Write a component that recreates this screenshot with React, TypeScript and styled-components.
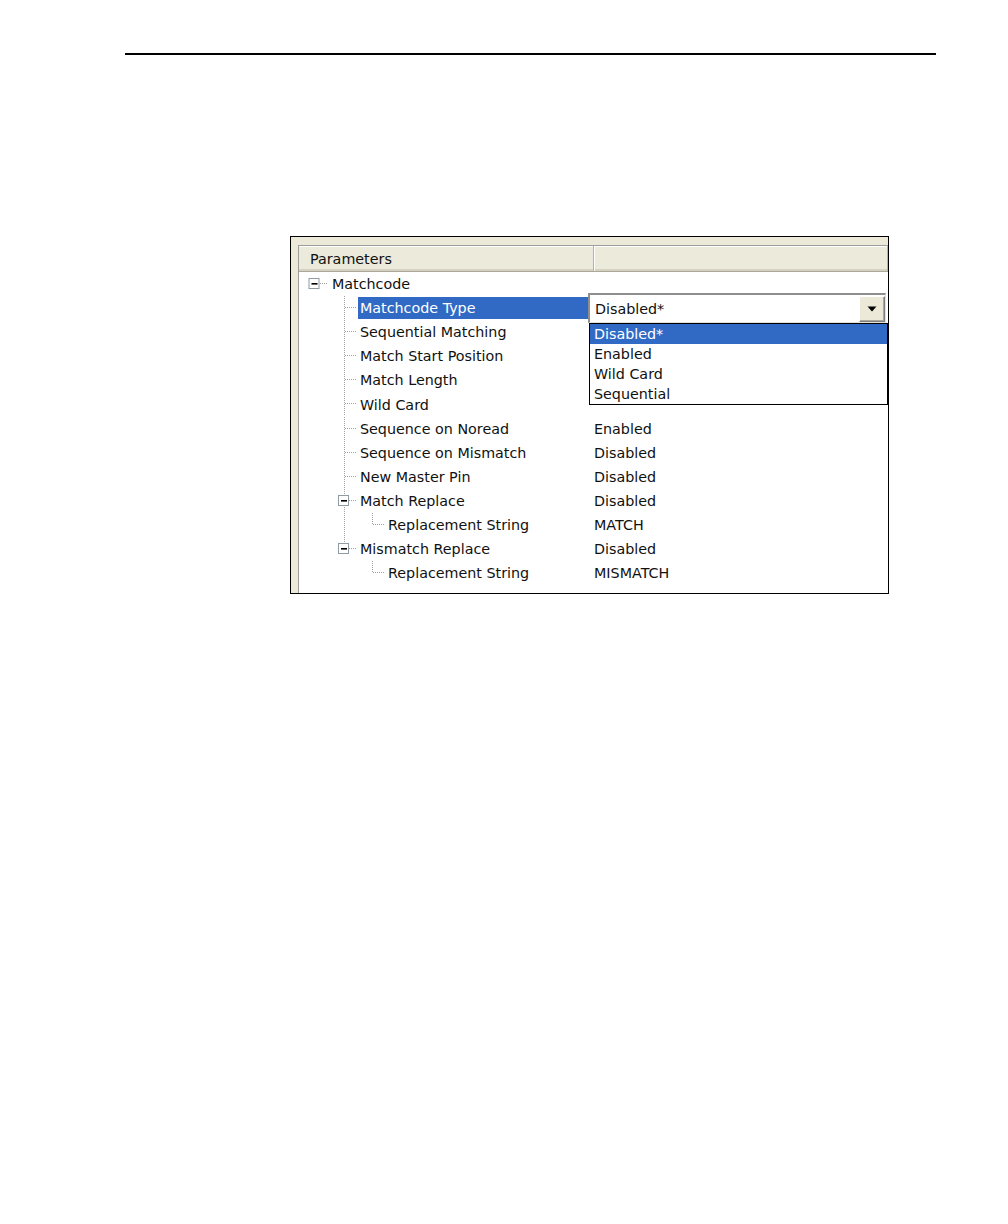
import React from "react";
import styled, { createGlobalStyle } from "styled-components";

const GlobalStyle = createGlobalStyle`
  html, body { margin: 0; padding: 0; background: #ffffff; }
  body { font-family: "DejaVu Sans", Verdana, sans-serif; }
`;

const Page = styled.div`
  width: 1008px;
  height: 1224px;
  padding-top: 53px;
  box-sizing: border-box;
`;

const Rule = styled.div`
  margin-left: 125px;
  width: 811px;
  height: 2px;
  background: #000;
`;

const Figure = styled.div`
  margin-top: 181px;
  margin-left: 290px;
  width: 599px;
  height: 358px;
  box-sizing: border-box;
  border: 1px solid #000;
  background: #ece9d8;
  padding: 8px 0 0 7px;
  overflow: hidden;
  font-family: "DejaVu Sans", Verdana, sans-serif;
  font-size: 14.3px;
  color: #111;
`;

const Inner = styled.div`
  height: 100%;
  background: #fff;
  border-top: 1px solid #9d9d9d;
  border-left: 1px solid #9d9d9d;
  display: flex;
  flex-direction: column;
`;

const Header = styled.div`
  display: flex;
  height: 26px;
  box-sizing: border-box;
  background: #ebeadb;
  border-bottom: 1px solid #aca899;
  box-shadow: inset 0 -2px 0 #d6d2c2, inset 0 1px 0 #fff;
`;

const HeaderCell = styled.div<{ $w?: number }>`
  ${(p) => (p.$w ? `width: ${p.$w}px; flex: none;` : "flex: 1;")}
  display: flex;
  align-items: center;
  padding-left: 11px;
  box-sizing: border-box;
  border-right: 1px solid #b5b29e;
  box-shadow: 1px 0 0 #fff;
  white-space: nowrap;
`;

const Body = styled.div`
  position: relative;
  display: flex;
  flex-direction: column;
`;

const Row = styled.div`
  display: flex;
  height: 24.1px;
  align-items: stretch;
`;

const NameCell = styled.div`
  width: 289px;
  flex: none;
  display: flex;
  align-items: stretch;
`;

const Gutter = styled.svg`
  flex: none;
  display: block;
`;

const Label = styled.div<{ $selected?: boolean }>`
  flex: 1;
  display: flex;
  align-items: center;
  padding-left: 2px;
  margin: 1px 0;
  white-space: nowrap;
  background: ${(p) => (p.$selected ? "#316ac5" : "transparent")};
  color: ${(p) => (p.$selected ? "#fff" : "#111")};
`;

const ValueCell = styled.div`
  flex: 1;
  display: flex;
  align-items: center;
  padding-left: 6px;
  white-space: nowrap;
`;

const Combo = styled.div`
  position: absolute;
  left: 289px;
  top: 21px;
  width: 298px;
  height: 30px;
  box-sizing: border-box;
  background: #fff;
  border-style: solid;
  border-width: 2px 1px 1px 2px;
  border-color: #8e8e8e #e4e2d6 #e4e2d6 #8e8e8e;
  display: flex;
  align-items: center;
  padding-left: 5px;
`;

const ComboText = styled.span`
  flex: 1;
  white-space: nowrap;
`;

const DropButton = styled.div`
  width: 26px;
  height: 26px;
  flex: none;
  box-sizing: border-box;
  background: #ece9d8;
  border-style: solid;
  border-width: 1px;
  border-color: #fff #7f7f7f #7f7f7f #fff;
  box-shadow: inset -1px -1px 0 #aca899;
  display: flex;
  align-items: center;
  justify-content: center;
`;

const List = styled.div`
  position: absolute;
  left: -1px;
  top: 28px;
  width: 299px;
  box-sizing: border-box;
  border: 1px solid #000;
  background: #fff;
  display: flex;
  flex-direction: column;
`;

const ListItem = styled.div<{ $selected?: boolean }>`
  height: 20px;
  display: flex;
  align-items: center;
  padding-left: 4px;
  white-space: nowrap;
  background: ${(p) => (p.$selected ? "#316ac5" : "#fff")};
  color: ${(p) => (p.$selected ? "#fff" : "#111")};
`;

type RowData = {
  label: string;
  level: 0 | 1 | 2;
  value?: string;
  box?: boolean;
  selected?: boolean;
  last1?: boolean;
  parentLast?: boolean;
};

const rows: RowData[] = [
  { label: "Matchcode", level: 0, box: true },
  { label: "Matchcode Type", level: 1, selected: true },
  { label: "Sequential Matching", level: 1 },
  { label: "Match Start Position", level: 1 },
  { label: "Match Length", level: 1 },
  { label: "Wild Card", level: 1 },
  { label: "Sequence on Noread", level: 1, value: "Enabled" },
  { label: "Sequence on Mismatch", level: 1, value: "Disabled" },
  { label: "New Master Pin", level: 1, value: "Disabled" },
  { label: "Match Replace", level: 1, box: true, value: "Disabled" },
  { label: "Replacement String", level: 2, value: "MATCH" },
  { label: "Mismatch Replace", level: 1, box: true, last1: true, value: "Disabled" },
  { label: "Replacement String", level: 2, parentLast: true, value: "MISMATCH" },
];

const DOT = "#a3a3a3";

const ExpandBox: React.FC<{ cx: number }> = ({ cx }) => (
  <g>
    <rect x={cx - 5.5} y={6.5} width={10} height={10} fill="#fff" stroke="#8f9aa3" />
    <rect x={cx - 3} y={11} width={6} height={1.6} fill="#000" />
  </g>
);

const TreeGutter: React.FC<{ row: RowData }> = ({ row }) => {
  const width = row.level === 0 ? 31 : row.level === 1 ? 59 : 87;
  const dash = { stroke: DOT, strokeWidth: 1, strokeDasharray: "1 1", shapeRendering: "crispEdges" as const };
  return (
    <Gutter width={width} height={24} viewBox={`0 0 ${width} 24`} preserveAspectRatio="none">
      {row.level === 0 && (
        <>
          <line x1={21} y1={11.5} x2={29} y2={11.5} {...dash} />
          <ExpandBox cx={15.5} />
        </>
      )}
      {row.level === 1 && (
        <>
          <line x1={45.5} y1={0} x2={45.5} y2={row.last1 ? 12 : 24} {...dash} />
          <line x1={46} y1={11.5} x2={57} y2={11.5} {...dash} />
          {row.box && <ExpandBox cx={45} />}
        </>
      )}
      {row.level === 2 && (
        <>
          {!row.parentLast && <line x1={45.5} y1={0} x2={45.5} y2={24} {...dash} />}
          <line x1={73.5} y1={0} x2={73.5} y2={12} {...dash} />
          <line x1={74} y1={11.5} x2={85} y2={11.5} {...dash} />
        </>
      )}
    </Gutter>
  );
};

const DownArrow = () => (
  <svg width="10" height="6" viewBox="0 0 10 6">
    <path d="M0.5 0.5 H9.5 L5 5.5 Z" fill="#000" />
  </svg>
);

export default function App() {
  return (
    <>
      <GlobalStyle />
      <Page>
        <Rule />
        <Figure>
          <Inner>
            <Header>
              <HeaderCell $w={295}>Parameters</HeaderCell>
              <HeaderCell />
            </Header>
            <Body>
              {rows.map((r, i) => (
                <Row key={i}>
                  <NameCell>
                    <TreeGutter row={r} />
                    <Label $selected={r.selected}>{r.label}</Label>
                  </NameCell>
                  <ValueCell>{r.value ?? ""}</ValueCell>
                </Row>
              ))}
              <Combo>
                <ComboText>Disabled*</ComboText>
                <DropButton>
                  <DownArrow />
                </DropButton>
                <List>
                  <ListItem $selected>Disabled*</ListItem>
                  <ListItem>Enabled</ListItem>
                  <ListItem>Wild Card</ListItem>
                  <ListItem>Sequential</ListItem>
                </List>
              </Combo>
            </Body>
          </Inner>
        </Figure>
      </Page>
    </>
  );
}
